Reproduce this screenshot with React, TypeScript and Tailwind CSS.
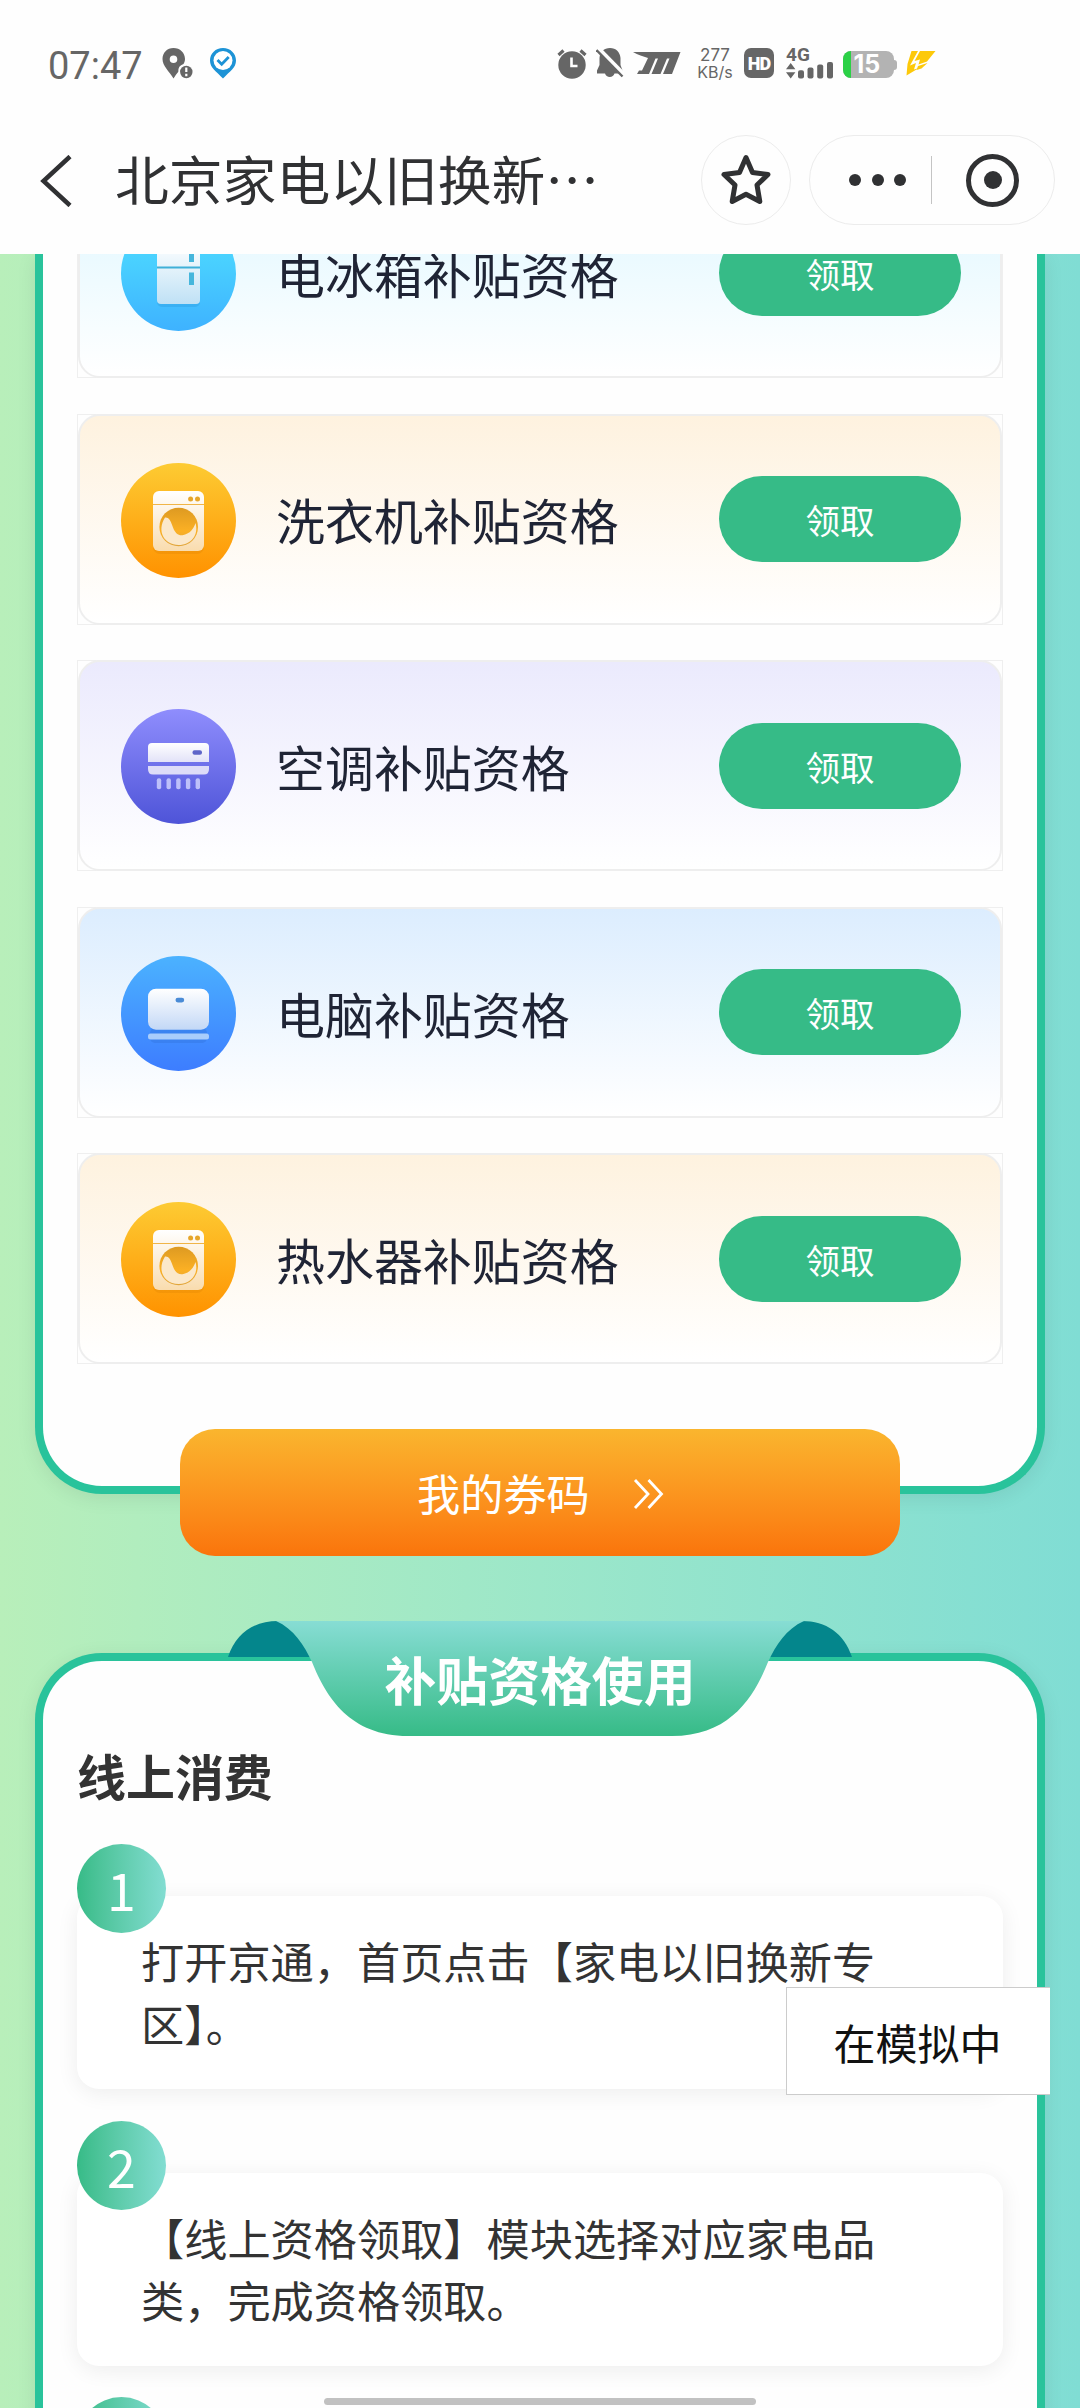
import type { ReactNode } from "react";
import { clsx } from "clsx";

interface TAppliance {
  name: string;
  bg: string;
  icon: ReactNode;
}

const Washer = ({ id }: { id: string }) => (
  <svg viewBox="0 0 115 115" className="size-[115px]">
    <defs>
      <linearGradient id={`${id}-bg`} x1="0" y1="0" x2="0" y2="1">
        <stop offset="0" stopColor="#fdcb33" />
        <stop offset="1" stopColor="#ff9200" />
      </linearGradient>
      <linearGradient id={`${id}-body`} x1="0" y1="0" x2="0" y2="1">
        <stop offset="0" stopColor="#ffffff" />
        <stop offset="1" stopColor="#f9dcae" />
      </linearGradient>
      <linearGradient id={`${id}-drum`} x1="0" y1="0" x2="0" y2="1">
        <stop offset="0" stopColor="#dd9a22" />
        <stop offset="0.6" stopColor="#fbb024" />
        <stop offset="1" stopColor="#e0a53c" />
      </linearGradient>
    </defs>
    <circle cx="57.5" cy="57.5" r="57.5" fill={`url(#${id}-bg)`} />
    <rect x="32" y="30" width="51" height="61" rx="7" fill="#d97c00" opacity="0.25" />
    <rect x="32" y="28" width="51" height="60" rx="6" fill={`url(#${id}-body)`} />
    <path d="M32 41.5h51" stroke="#f0b548" strokeWidth="1.2" />
    <circle cx="69.6" cy="36" r="2.5" fill="#e6a62c" />
    <circle cx="76.5" cy="36" r="2.5" fill="#e6a62c" />
    <circle cx="57.7" cy="64" r="19.3" fill={`url(#${id}-drum)`} />
    <path
      d="M44 54.500C48.500 54 50 59 52 64.500C54.500 71 58 73 62.500 72C69 70.500 72.500 66 74.500 60C78 72 70 82 57.700 82C43 82 35.500 68 44 54.500Z"
      fill="#fbe8ca"
    />
  </svg>
);

const Fridge = () => (
  <svg viewBox="0 0 115 115" className="size-[115px]">
    <defs>
      <linearGradient id="fridge-bg" x1="0" y1="0" x2="0" y2="1">
        <stop offset="0" stopColor="#4fdcfe" />
        <stop offset="0.4" stopColor="#49d0ff" />
        <stop offset="1" stopColor="#3eb2ff" />
      </linearGradient>
      <linearGradient id="fridge-body" x1="0" y1="0" x2="0" y2="1">
        <stop offset="0" stopColor="#ffffff" />
        <stop offset="1" stopColor="#bfe1f5" />
      </linearGradient>
    </defs>
    <circle cx="57.5" cy="57.5" r="57.5" fill="url(#fridge-bg)" />
    <rect x="36" y="30" width="43" height="61" rx="5" fill="#1d86c8" opacity="0.22" />
    <rect x="36" y="26" width="43" height="62" rx="4" fill="url(#fridge-body)" />
    <path d="M36 51.5h43" stroke="#3fb0d8" strokeWidth="1.8" />
    <path d="M70.500 36v10M70.500 56.500v12.500" stroke="#45b6dc" strokeWidth="5" />
  </svg>
);

const AirConditioner = () => (
  <svg viewBox="0 0 115 115" className="size-[115px]">
    <defs>
      <linearGradient id="ac-bg" x1="0" y1="0" x2="0" y2="1">
        <stop offset="0" stopColor="#8f8dfd" />
        <stop offset="1" stopColor="#4e54d8" />
      </linearGradient>
      <linearGradient id="ac-body" x1="0" y1="0" x2="0" y2="1">
        <stop offset="0" stopColor="#ffffff" />
        <stop offset="1" stopColor="#e2e2f8" />
      </linearGradient>
    </defs>
    <circle cx="57.5" cy="57.5" r="57.5" fill="url(#ac-bg)" />
    <path d="M27 53V38q0-4 4-4h53q4 0 4 4v15z" fill="url(#ac-body)" />
    <path d="M27 57h61v3q0 5.500-5 5.500H32q-5 0-5-5.500z" fill="#dddcf8" />
    <rect x="71.5" y="41.3" width="9.5" height="4.4" rx="2" fill="#5f66c9" />
    {[35.8, 45.5, 55.2, 64.9, 74.6].map((x) => (
      <rect key={x} x={x} y="69.3" width="4.4" height="11" rx="2" fill="#bdc0fa" />
    ))}
  </svg>
);

const Computer = () => (
  <svg viewBox="0 0 115 115" className="size-[115px]">
    <defs>
      <linearGradient id="pc-bg" x1="0" y1="0" x2="0" y2="1">
        <stop offset="0" stopColor="#4bb2ff" />
        <stop offset="1" stopColor="#3d7dff" />
      </linearGradient>
      <linearGradient id="pc-body" x1="0" y1="0" x2="0" y2="1">
        <stop offset="0" stopColor="#ffffff" />
        <stop offset="1" stopColor="#c3d8f6" />
      </linearGradient>
    </defs>
    <circle cx="57.5" cy="57.5" r="57.5" fill="url(#pc-bg)" />
    <rect x="29" y="72" width="57" height="15" rx="5" fill="#2763c8" opacity="0.25" />
    <rect x="27" y="32.7" width="61" height="41" rx="8" fill="url(#pc-body)" />
    <rect x="27" y="77.4" width="61" height="6.2" rx="2.5" fill="#a9cdfb" />
    <rect x="54.5" y="41.7" width="8.7" height="4.7" rx="2.3" fill="#4a8bd6" />
  </svg>
);

const appliances: TAppliance[] = [
  { name: "电冰箱补贴资格", bg: "from-[#dcf6ff] to-white", icon: <Fridge /> },
  { name: "洗衣机补贴资格", bg: "from-[#fef2df] to-white", icon: <Washer id="washer" /> },
  { name: "空调补贴资格", bg: "from-[#ebeafd] to-white", icon: <AirConditioner /> },
  { name: "电脑补贴资格", bg: "from-[#dcedfe] to-white", icon: <Computer /> },
  { name: "热水器补贴资格", bg: "from-[#fef2df] to-white", icon: <Washer id="heater" /> },
];

const steps = [
  "打开京通，首页点击【家电以旧换新专区】。",
  "【线上资格领取】模块选择对应家电品类，完成资格领取。",
  "",
];

const StatusBar = () => (
  <div className="flex h-[106px] items-start pt-[48px] font-[Roboto,sans-serif] text-[#666]">
    <span className="ml-[48px] w-[114px] text-[38px] leading-[36px]">07:47</span>
    <svg width="31" height="31" viewBox="0 0 31 31" fill="#666">
      <path
        fillRule="evenodd"
        d="M11.500 0C5 0 .5 4.800.5 11c0 7 6.500 12 11 19.500 1.500-2.500 3-4.600 4.800-6.800A7.500 7.500 0 0 1 21.500 16c1-1.600 1.500-3.200 1.500-5C23 4.800 18 0 11.500 0zm0 7.500a3.800 3.800 0 1 1 0 7.600 3.800 3.800 0 0 1 0-7.600z"
      />
      <circle cx="24.3" cy="24" r="6.2" />
      <path d="M24.300 19.500v4.500M24.300 25.800v2.500" stroke="#fff" strokeWidth="2.2" />
    </svg>
    <svg width="26" height="31" viewBox="0 0 26 31" className="ml-[17px]">
      <path d="M13 0C5.500 0 0 5.500 0 12.500c0 7.500 6 10.500 13 18 7-7.500 13-10.500 13-18C26 5.500 20.500 0 13 0z" fill="#1d93d6" />
      <circle cx="13" cy="12.5" r="9.5" fill="#fff" />
      <path d="M7.500 12l4.200 4.300 7-7.300" fill="none" stroke="#1d93d6" strokeWidth="2.8" />
    </svg>
    <svg width="30" height="31" viewBox="0 0 30 31" fill="#666" className="ml-[321px]">
      <circle cx="15" cy="17" r="13.7" />
      <path d="M1.500 7l5-4.500M28.500 7l-5-4.500" stroke="#666" strokeWidth="3.2" />
      <path d="M14.500 9.500V18H20.500" fill="none" stroke="#fff" strokeWidth="2.6" />
    </svg>
    <svg width="28" height="31" viewBox="0 0 28 31" fill="#666" className="ml-[9px]">
      <path d="M14 0c6 0 10 4 10.500 10v7l2 5.500v3H18.500a5 5 0 0 1-9.500 0H1v-3l2.500-5.500v-7C4 4 8 0 14 0z" />
      <path d="M2 .500L28 27" stroke="#fff" strokeWidth="5" />
      <path d="M.500 2L26.500 28.500" stroke="#666" strokeWidth="2.4" />
    </svg>
    <svg width="48" height="24" viewBox="0 0 48 24" fill="#666" className="ml-[9px] mt-[4px]">
      <path d="M0 0h47.500l-8.500 22h-9L36.500 6.500h-2.500L27.500 22h-9L25 6.500h-2.500L16 22H4L6 18.500H9L15 6C10 4.500 5 3 0 0z" />
    </svg>
    <div className="ml-[16px] flex w-[36px] flex-col items-center font-[Inter,sans-serif]">
      <span className="mt-[-2px] text-[17px] leading-[18px]">277</span>
      <span className="text-[16px] leading-[17px]">KB/s</span>
    </div>
    <span className="ml-[11px] flex h-[30px] w-[30px] items-center justify-center rounded-[7px] bg-[#666] text-[18px] font-black tracking-[-1px] text-white">
      HD
    </span>
    <div className="ml-[12px] w-[48px]">
      <div className="h-[14px] text-[19px] leading-[14px] font-bold">4G</div>
      <svg width="48" height="17" viewBox="0 0 48 17" fill="#666">
        <path d="M0 7.200L4.700 1L9.400 7.200zM0 10.200h9.400L4.700 16.500z" />
        <rect x="12" y="8.2" width="6" height="8.3" rx="2" />
        <rect x="21.5" y="5.5" width="6" height="11" rx="2" />
        <rect x="31.2" y="2.5" width="6" height="14" rx="2" />
        <rect x="41" y="0" width="6" height="16.5" rx="2" />
      </svg>
    </div>
    <div className="ml-[9px] mt-[3px] flex items-center">
      <span className="flex h-[27px] w-[51px] items-center overflow-hidden rounded-[8px] bg-[#b3b3b3] font-[Inter,sans-serif] text-[25px] leading-[27px] font-bold text-white">
        <span className="mr-[3px] h-full w-[7.5px] bg-[#2bd146]" />
        15
      </span>
      <span className="h-[10px] w-[3px] rounded-r-[3px] bg-[#b3b3b3]" />
    </div>
    <svg width="30" height="25" viewBox="0 0 30 25" className="ml-[9px] mt-[3px]">
      <path d="M5.500 0H12L4 14.500L10 12L8 18.500L13 17L.500 24.500L1.500 13z" fill="#fdc90a" />
      <path d="M14 0H29.500L21 10.500L12.500 13.500L14 8.500L8.500 10z" fill="#fdc90a" />
      <path d="M12 15L21.500 12L15.500 17.500L10.500 19z" fill="#fdc90a" />
    </svg>
  </div>
);

const TitleBar = () => (
  <div className="flex h-[148px] items-start pt-[29px] text-[#303133]">
    <svg width="32" height="52" viewBox="0 0 32 52" className="ml-[40px] mt-[20px]">
      <path d="M30 1.500L3.500 26L30 50.500" fill="none" stroke="#303133" strokeWidth="4.5" />
    </svg>
    <h1 className="ml-[43px] mt-[3px] w-[586px] text-[53.8px] leading-[80px]">北京家电以旧换新…</h1>
    <div className="flex size-[90px] items-center justify-center rounded-full border-[1.5px] border-[#ececec]">
      <svg width="54" height="54" viewBox="0 0 54 54" fill="none" stroke="#303133" strokeWidth="5" strokeLinejoin="round">
        <path d="M27 4.500L33.500 19.500L49 21.500L38 32L40.800 48.500L27 41.300L13.200 48.500L16 32L5 21.500L20.500 19.500z" />
      </svg>
    </div>
    <div className="ml-[18px] flex h-[90px] w-[246px] items-center rounded-full border-[1.5px] border-[#ececec]">
      <div className="ml-[39px] flex gap-[10.5px]">
        <span className="size-[12px] rounded-full bg-[#303133]" />
        <span className="size-[12px] rounded-full bg-[#303133]" />
        <span className="size-[12px] rounded-full bg-[#303133]" />
      </div>
      <span className="ml-[25px] h-[48px] w-px bg-[#c4c4c4]" />
      <span className="ml-[34px] flex size-[53px] items-center justify-center rounded-full border-[5.5px] border-[#303133]">
        <span className="size-[18px] rounded-full bg-[#303133]" />
      </span>
    </div>
  </div>
);

const ApplianceCard = ({ name, bg, icon }: TAppliance) => (
  <div className="h-[211px] shrink-0 border border-[#efefef]">
    <div
      className={clsx(
        "-my-px flex h-[211px] items-center rounded-[22px] border-2 border-[#eee] bg-linear-to-b pl-[41px] pr-[39px]",
        bg,
      )}
    >
      <div className="mt-[2px]">{icon}</div>
      <span className="ml-[40px] flex-1 text-[48.96px] text-[#1f2435]">{name}</span>
      <button className="h-[86px] w-[242px] rounded-full bg-[#36bb87] pt-[2px] text-[34.56px] text-white">
        领取
      </button>
    </div>
  </div>
);

const Ribbon = () => (
  <div className="relative mx-auto mt-[65px] flex h-[115px] w-[624px] items-center justify-center">
    <svg width="624" height="115" viewBox="0 0 624 115" className="absolute inset-0">
      <defs>
        <linearGradient id="ribbon" x1="0" y1="0" x2="0" y2="1">
          <stop offset="0" stopColor="#87ddd4" />
          <stop offset="1" stopColor="#36bb87" />
        </linearGradient>
      </defs>
      <path d="M0 36C8 12 26 0 50 0L100 1V36zM624 36C616 12 598 0 574 0L524 1V36z" fill="#04868c" />
      <path
        d="M48 0C66 8 76 24 84 41C98 76 122 115 180 115H444C502 115 526 76 540 41C548 24 558 8 576 0z"
        fill="url(#ribbon)"
      />
    </svg>
    <h2 className="relative mt-[1px] text-[51.84px] font-bold text-white">补贴资格使用</h2>
  </div>
);

const Step = ({ index, text }: { index: number; text: string }) => (
  <div className="relative h-[276.5px] shrink-0 pt-[52px]">
    <div className="h-[193px] rounded-[22px] bg-white pl-[64px] pt-[33px] shadow-[0_4px_22px_rgba(0,0,0,0.07)]">
      <p className="w-[750px] text-[43.2px] leading-[62.5px]">{text}</p>
    </div>
    <span className="absolute left-0 top-0 flex size-[89px] items-center justify-center rounded-full bg-linear-to-r from-[#36bb87] to-[#82ddd2] pt-[1px] text-[51.84px] text-white">
      {index}
    </span>
  </div>
);

const App = () => {
  return (
    <div className="relative flex h-[2408px] w-[1080px] flex-col overflow-hidden bg-white font-['Noto_Sans_CJK_SC',sans-serif]">
      <header className="h-[254px] shrink-0 bg-[#fefefe]">
        <StatusBar />
        <TitleBar />
      </header>

      <main className="h-[2154px] overflow-hidden bg-linear-to-r from-[#b8efba] via-[#9ce7c9] to-[#80ddd4]">
        {/* Appliance list, scrolled partly under the header */}
        <section className="mx-[35px] h-[1240px] rounded-b-[67px] border-8 border-t-0 border-[#29c39b] bg-[#fefefe] shadow-[0_4px_20px_rgba(0,0,0,0.08)]">
          <div className="h-full overflow-hidden rounded-b-[59px]">
            <div className="mx-[34px] mt-[-87px] flex flex-col gap-[35.6px]">
              {appliances.map((item) => (
                <ApplianceCard key={item.name} {...item} />
              ))}
            </div>
          </div>
        </section>

        <button className="relative mx-auto -mt-[65px] flex h-[127px] w-[720px] items-center rounded-[35px] bg-linear-to-b from-[#fab52e] to-[#fa740b] pl-[237px] text-[43.2px] text-white">
          我的券码
          <svg width="32" height="30" viewBox="0 0 32 30" fill="none" stroke="#fff" strokeWidth="2.8" className="ml-[43px] mt-[3px]">
            <path d="M2 1L15 15L2 29M15.500 1L28.500 15L15.500 29" />
          </svg>
        </button>

        <Ribbon />

        <section className="mx-[35px] -mt-[83px] h-[900px] rounded-t-[67px] border-8 border-b-0 border-[#29c39b] bg-[#fefefe] px-[34px] text-[#333] shadow-[0_4px_20px_rgba(0,0,0,0.08)]">
          <h3 className="pt-[78px] text-[48.96px] leading-[72px] font-bold">线上消费</h3>
          <div className="mt-[33px]">
            {steps.map((text, i) => (
              <Step key={i} index={i + 1} text={text} />
            ))}
          </div>
        </section>
      </main>

      <div className="absolute left-[786px] top-[1987px] flex h-[108px] w-[264px] items-center justify-center border border-r-0 border-[#ccc] bg-white pr-[2px] text-[42px] text-[#111]">
        在模拟中
      </div>
      <div className="absolute left-[324px] top-[2398px] h-[7px] w-[432px] rounded-full bg-[#c1c1c1]" />
    </div>
  );
};

export default App;
